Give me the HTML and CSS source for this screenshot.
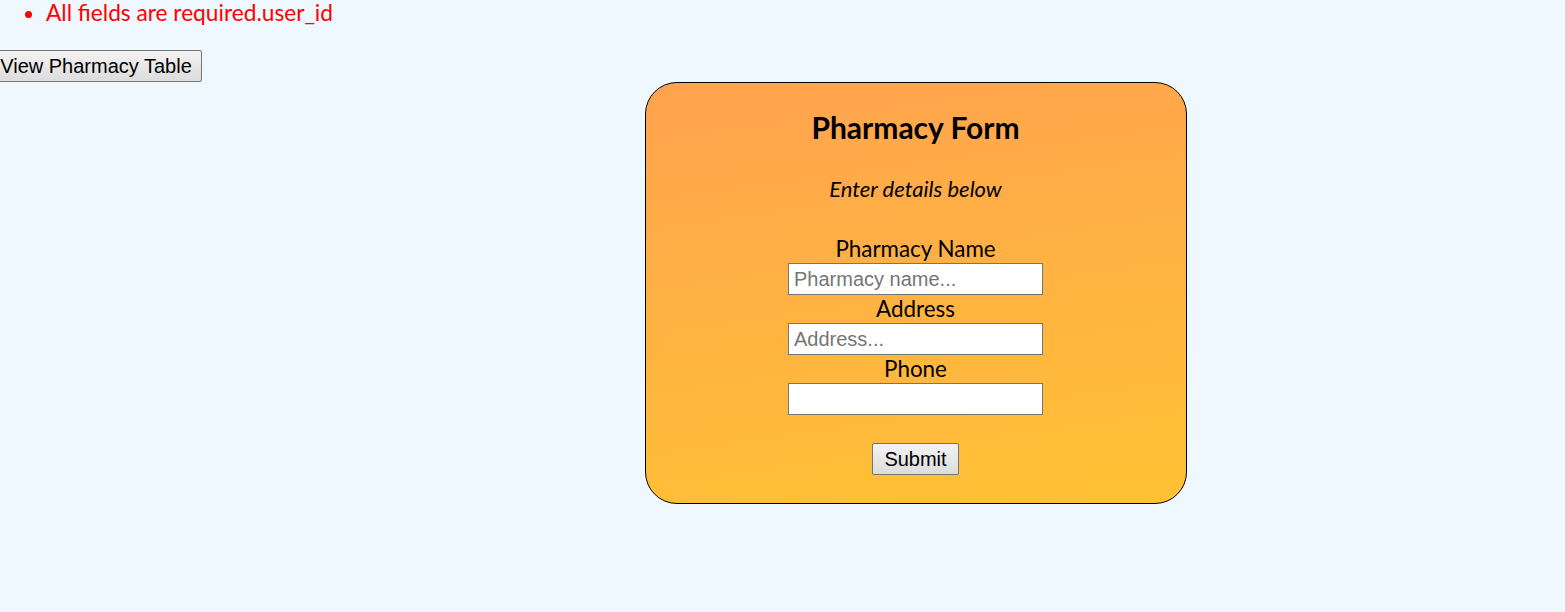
FILE: index.html
```html
<!DOCTYPE html>
<html>
<head>
<meta charset="utf-8">
<title>Pharmacy Form</title>
<link rel="stylesheet" href="styles.css">
</head>
<body>
<ul class="errors">
  <li>All fields are required.user_id</li>
</ul>
<div class="toolbar">
  <button class="btn btn-view" type="button">View Pharmacy Table</button>
</div>
<form class="card">
  <h2 class="card-title">Pharmacy Form</h2>
  <p class="card-sub">Enter details below</p>
  <label class="field-label" for="pname">Pharmacy Name</label>
  <input class="field" id="pname" type="text" placeholder="Pharmacy name...">
  <label class="field-label" for="addr">Address</label>
  <input class="field" id="addr" type="text" placeholder="Address...">
  <label class="field-label" for="phone">Phone</label>
  <input class="field" id="phone" type="text">
  <button class="btn btn-submit" type="button">Submit</button>
</form>
</body>
</html>
```
FILE: styles.css
```css
html, body {
  margin: 0;
  padding: 0;
}
body {
  background: #eff7ff;
  font-family: "Lato", "Noto Sans", sans-serif;
  color: #000;
}
.errors {
  margin: 0;
  padding-left: 46px;
  color: #ff0000;
  font-size: 22.7px;
  line-height: 26px;
}
.toolbar {
  margin-top: 24px;
  display: flex;
}
.btn {
  font-family: "Liberation Sans", Arial, sans-serif;
  font-size: 20px;
  height: 32px;
  color: #000;
  background: linear-gradient(#f3f3f3, #dcdcdc);
  border: 1px solid #767676;
  border-radius: 2px;
  padding: 0 12px;
  box-sizing: border-box;
  white-space: nowrap;
}
.btn-view {
  margin-left: -10px;
  width: 212px;
  padding: 0 6px;
}
.card {
  margin-left: 645px;
  width: 542px;
  height: 422px;
  box-sizing: border-box;
  border: 1px solid #000;
  border-radius: 32px;
  background: linear-gradient(172deg, #ffa34f 0%, #ffb143 45%, #ffc233 100%);
  display: flex;
  flex-direction: column;
  align-items: center;
  padding-top: 28px;
  padding-right: 1px;
}
.card-title {
  margin: 0;
  font-size: 30px;
  line-height: 32px;
  font-weight: 700;
}
.card-sub {
  margin: 32px 0 0;
  font-size: 22px;
  line-height: 28px;
  font-style: italic;
}
.field-label {
  font-size: 22.4px;
  line-height: 28px;
}
.card-sub + .field-label {
  margin-top: 32px;
}
.field {
  width: 255px;
  height: 32px;
  box-sizing: border-box;
  border: 1px solid #767676;
  background: #fff;
  padding: 0 5px;
  font-family: "Liberation Sans", Arial, sans-serif;
  font-size: 20px;
  margin: 0;
}
.field::placeholder {
  color: #757575;
}
.btn-submit {
  margin-top: 28px;
  width: 87px;
  padding: 0;
}
```
